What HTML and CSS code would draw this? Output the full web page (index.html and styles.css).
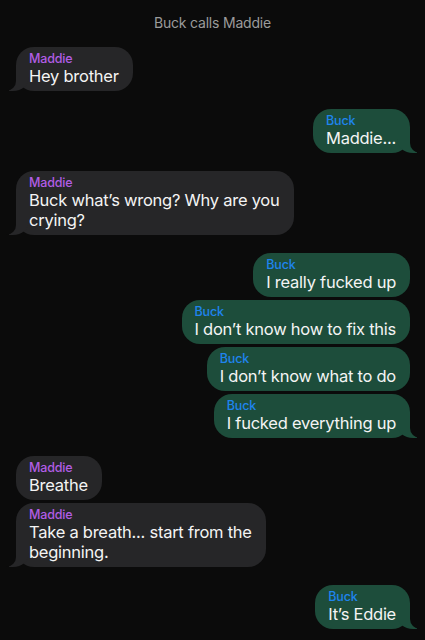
FILE: index.html
```html
<!DOCTYPE html>
<html lang="en">
<head>
    <meta charset="UTF-8">
    <meta name="viewport" content="width=device-width, initial-scale=1.0">
    <title>Buck calls Maddie</title>
    <link rel="stylesheet" href="styles.css">
</head>
<body>
    <div class="chat-title">Buck calls Maddie</div>

    <div class="chat">
        <div class="group">
            <div class="bubble them tail">
                <div class="name">Maddie</div>
                <div class="text">Hey brother</div>
            </div>
        </div>

        <div class="group">
            <div class="bubble me tail">
                <div class="name">Buck</div>
                <div class="text">Maddie...</div>
            </div>
        </div>

        <div class="group">
            <div class="bubble them tail">
                <div class="name">Maddie</div>
                <div class="text">Buck what’s wrong? Why are you<br>crying?</div>
            </div>
        </div>

        <div class="group">
            <div class="bubble me">
                <div class="name">Buck</div>
                <div class="text">I really fucked up</div>
            </div>
            <div class="bubble me">
                <div class="name">Buck</div>
                <div class="text">I don’t know how to fix this</div>
            </div>
            <div class="bubble me">
                <div class="name">Buck</div>
                <div class="text">I don’t know what to do</div>
            </div>
            <div class="bubble me tail">
                <div class="name">Buck</div>
                <div class="text">I fucked everything up</div>
            </div>
        </div>

        <div class="group">
            <div class="bubble them">
                <div class="name">Maddie</div>
                <div class="text">Breathe</div>
            </div>
            <div class="bubble them tail">
                <div class="name">Maddie</div>
                <div class="text">Take a breath... start from the<br>beginning.</div>
            </div>
        </div>

        <div class="group">
            <div class="bubble me tail">
                <div class="name">Buck</div>
                <div class="text">It’s Eddie</div>
            </div>
        </div>
    </div>
</body>
</html>
```

FILE: styles.css
```css
:root {
    --bg: #0b0b0b;
    --them: #262628;
    --me: #1d4d3b;
}

body {
    margin: 0;
    background-color: var(--bg);
    font-family: Inter, "Noto Sans", sans-serif;
    color: #f4f4f4;
}

.chat-title {
    text-align: center;
    font-size: 14px;
    line-height: 17px;
    letter-spacing: -0.2px;
    color: #9b9b9b;
    padding-top: 14px;
    margin-bottom: 16px;
}

.chat {
    display: flex;
    flex-direction: column;
    gap: 18px;
    padding: 0 15px 0 16px;
}

.group {
    display: flex;
    flex-direction: column;
    gap: 3px;
}

.bubble {
    position: relative;
    max-width: 300px;
    padding: 4px 14px 5px 13px;
    border-radius: 18px;
    box-sizing: border-box;
}

.bubble .name {
    font-size: 12.5px;
    line-height: 15px;
    font-weight: 500;
    letter-spacing: -0.15px;
}

.bubble .text {
    font-size: 16.5px;
    line-height: 20px;
    letter-spacing: -0.25px;
}

.them {
    align-self: flex-start;
    background-color: var(--them);
}
.them .name {
    color: #b25de4;
}

.me {
    align-self: flex-end;
    background-color: var(--me);
}
.me .name {
    color: #1f84ee;
}

/* little tails at the bottom corner */
.tail::before,
.tail::after {
    content: "";
    position: absolute;
    bottom: 0;
    height: 20px;
}

.them.tail::before {
    left: -7px;
    width: 20px;
    background-color: var(--them);
    border-bottom-right-radius: 16px 14px;
}
.them.tail::after {
    left: -26px;
    width: 26px;
    background-color: var(--bg);
    border-bottom-right-radius: 10px;
}

.me.tail::before {
    right: -7px;
    width: 20px;
    background-color: var(--me);
    border-bottom-left-radius: 16px 14px;
}
.me.tail::after {
    right: -26px;
    width: 26px;
    background-color: var(--bg);
    border-bottom-left-radius: 10px;
}
```
